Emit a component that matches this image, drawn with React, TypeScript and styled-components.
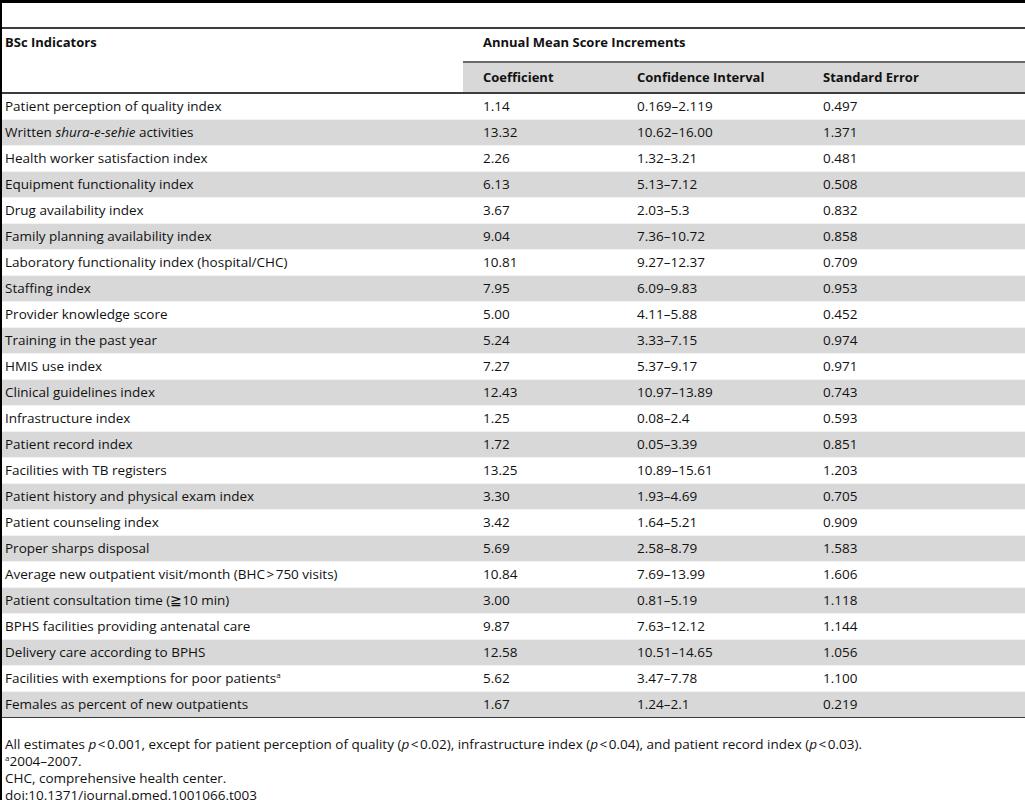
import React, { FC } from "react";
import styled, { createGlobalStyle } from "styled-components";

const GlobalStyle = createGlobalStyle`
  html, body {
    margin: 0;
    padding: 0;
    background: #ffffff;
  }
  body {
    font-family: "Open Sans", "Noto Sans", sans-serif;
    font-size: 13.5px;
    color: #111;
  }
`;

const Sup = styled.sup`
  font-size: 8px;
  vertical-align: 5px;
  line-height: 0;
`;

// relation signs in the source are set wider than the plain ascii glyph
const Rel = styled.span`
  display: inline-block;
  margin: 0 1.5px;
`;

type Row = {
  label: React.ReactNode;
  coefficient: string;
  interval: string;
  error: string;
};

const rows: Row[] = [
  { label: "Patient perception of quality index", coefficient: "1.14", interval: "0.169–2.119", error: "0.497" },
  {
    label: (
      <>
        Written <i>shura-e-sehie</i> activities
      </>
    ),
    coefficient: "13.32",
    interval: "10.62–16.00",
    error: "1.371",
  },
  { label: "Health worker satisfaction index", coefficient: "2.26", interval: "1.32–3.21", error: "0.481" },
  { label: "Equipment functionality index", coefficient: "6.13", interval: "5.13–7.12", error: "0.508" },
  { label: "Drug availability index", coefficient: "3.67", interval: "2.03–5.3", error: "0.832" },
  { label: "Family planning availability index", coefficient: "9.04", interval: "7.36–10.72", error: "0.858" },
  { label: "Laboratory functionality index (hospital/CHC)", coefficient: "10.81", interval: "9.27–12.37", error: "0.709" },
  { label: "Staffing index", coefficient: "7.95", interval: "6.09–9.83", error: "0.953" },
  { label: "Provider knowledge score", coefficient: "5.00", interval: "4.11–5.88", error: "0.452" },
  { label: "Training in the past year", coefficient: "5.24", interval: "3.33–7.15", error: "0.974" },
  { label: "HMIS use index", coefficient: "7.27", interval: "5.37–9.17", error: "0.971" },
  { label: "Clinical guidelines index", coefficient: "12.43", interval: "10.97–13.89", error: "0.743" },
  { label: "Infrastructure index", coefficient: "1.25", interval: "0.08–2.4", error: "0.593" },
  { label: "Patient record index", coefficient: "1.72", interval: "0.05–3.39", error: "0.851" },
  { label: "Facilities with TB registers", coefficient: "13.25", interval: "10.89–15.61", error: "1.203" },
  { label: "Patient history and physical exam index", coefficient: "3.30", interval: "1.93–4.69", error: "0.705" },
  { label: "Patient counseling index", coefficient: "3.42", interval: "1.64–5.21", error: "0.909" },
  { label: "Proper sharps disposal", coefficient: "5.69", interval: "2.58–8.79", error: "1.583" },
  {
    label: (
      <>
        Average new outpatient visit/month (BHC<Rel>&gt;</Rel>750 visits)
      </>
    ),
    coefficient: "10.84",
    interval: "7.69–13.99",
    error: "1.606",
  },
  { label: "Patient consultation time (≧10 min)", coefficient: "3.00", interval: "0.81–5.19", error: "1.118" },
  { label: "BPHS facilities providing antenatal care", coefficient: "9.87", interval: "7.63–12.12", error: "1.144" },
  { label: "Delivery care according to BPHS", coefficient: "12.58", interval: "10.51–14.65", error: "1.056" },
  {
    label: (
      <>
        Facilities with exemptions for poor patients<Sup>a</Sup>
      </>
    ),
    coefficient: "5.62",
    interval: "3.47–7.78",
    error: "1.100",
  },
  { label: "Females as percent of new outpatients", coefficient: "1.67", interval: "1.24–2.1", error: "0.219" },
];

const Page = styled.div`
  border-left: 2px solid #000;
  min-height: 800px;
  box-sizing: border-box;
`;

const TopRule = styled.div`
  border-top: 3px solid #000;
  border-bottom: 2px solid #3c3c3c;
  box-sizing: border-box;
  height: 29px;
`;

const Table = styled.table`
  width: 100%;
  border-collapse: collapse;
  table-layout: fixed;
  border-bottom: 1px solid #3c3c3c;
`;

const HeadCell = styled.th<{ $first?: boolean; $rule?: boolean }>`
  text-align: left;
  font-size: 13px;
  font-weight: 700;
  vertical-align: top;
  padding: ${(p) => (p.$first ? "4px 0 0 3px" : "4px 0 0 20px")};
  height: 33px;
  box-sizing: border-box;
  border-bottom: ${(p) => (p.$rule ? "2px solid #6a6a6a" : "none")};
`;

const SubHeadRow = styled.tr`
  background: #d8d8d8;
  border-bottom: 2px solid #3c3c3c;
`;

const SubHeadCell = styled.th`
  text-align: left;
  font-size: 13px;
  font-weight: 700;
  height: 31px;
  padding: 0 0 1px 20px;
  box-sizing: border-box;
`;

const BodyRow = styled.tr<{ $shaded: boolean }>`
  background: ${(p) => (p.$shaded ? "#d8d8d8" : "#ffffff")};
  border-top: 1px solid #f2f2f2;
`;

const Cell = styled.td<{ $first?: boolean }>`
  height: 26px;
  padding: ${(p) => (p.$first ? "0 0 0 3px" : "0 0 0 20px")};
  box-sizing: border-box;
  white-space: nowrap;
`;

const Notes = styled.div`
  padding: 18px 0 0 3px;
  line-height: 17px;
`;

const Note = styled.div``;

const App: FC = () => {
  return (
    <Page>
      <GlobalStyle />
      <TopRule />
      <Table>
        <colgroup>
          <col style={{ width: 461 }} />
          <col style={{ width: 154 }} />
          <col style={{ width: 186 }} />
          <col />
        </colgroup>
        <thead>
          <tr>
            <HeadCell $first rowSpan={2}>
              BSc Indicators
            </HeadCell>
            <HeadCell colSpan={3} $rule>
              Annual Mean Score Increments
            </HeadCell>
          </tr>
          <SubHeadRow>
            <SubHeadCell>Coefficient</SubHeadCell>
            <SubHeadCell>Confidence Interval</SubHeadCell>
            <SubHeadCell>Standard Error</SubHeadCell>
          </SubHeadRow>
        </thead>
        <tbody>
          {rows.map((row, i) => (
            <BodyRow key={i} $shaded={i % 2 === 1}>
              <Cell $first>{row.label}</Cell>
              <Cell>{row.coefficient}</Cell>
              <Cell>{row.interval}</Cell>
              <Cell>{row.error}</Cell>
            </BodyRow>
          ))}
        </tbody>
      </Table>
      <Notes>
        <Note>
          All estimates <i>p</i>
          <Rel>&lt;</Rel>0.001, except for patient perception of quality (<i>p</i>
          <Rel>&lt;</Rel>0.02), infrastructure index (<i>p</i>
          <Rel>&lt;</Rel>0.04), and patient record index (<i>p</i>
          <Rel>&lt;</Rel>0.03).
        </Note>
        <Note>
          <Sup>a</Sup>2004–2007.
        </Note>
        <Note>CHC, comprehensive health center.</Note>
        <Note>doi:10.1371/journal.pmed.1001066.t003</Note>
      </Notes>
    </Page>
  );
};

export default App;
